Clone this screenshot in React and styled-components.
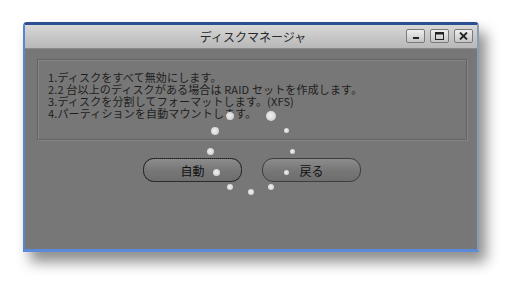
import React from 'react';
import styled, { createGlobalStyle } from 'styled-components';

const GlobalStyle = createGlobalStyle`
  html, body {
    margin: 0;
    padding: 0;
    background: #ffffff;
  }
  body {
    font-family: "Noto Sans CJK JP", "Liberation Sans", sans-serif;
  }
`;

const lines = [
  '1.ディスクをすべて無効にします。',
  '2.2 台以上のディスクがある場合は RAID セットを作成します。',
  '3.ディスクを分割してフォーマットします。(XFS)',
  '4.パーティションを自動マウントします。',
];

// spinner dots: offsets from ring centre, radius
const dots = [
  { x: -21, y: -37, r: 4 },
  { x: 20, y: -37, r: 5 },
  { x: 35, y: -23, r: 2.5 },
  { x: 41, y: -2, r: 2.5 },
  { x: 35, y: 19, r: 2.5 },
  { x: 20, y: 34, r: 3 },
  { x: 0, y: 39, r: 3 },
  { x: -21, y: 34, r: 3 },
  { x: -35, y: 19, r: 3.5 },
  { x: -41, y: -2, r: 3.5 },
  { x: -36, y: -22, r: 4 },
];

export default function App() {
  return (
    <>
      <GlobalStyle />
      <Page>
        <Window>
          <TitleBar>
            <Title>ディスクマネージャ</Title>
            <Controls>
              <CtrlButton aria-label="minimize">
                <svg width="8" height="8" viewBox="0 0 8 8">
                  <rect x="1" y="5" width="6" height="2" fill="#222" />
                </svg>
              </CtrlButton>
              <CtrlButton aria-label="maximize">
                <svg width="9" height="8" viewBox="0 0 9 8">
                  <rect x="0.5" y="0.5" width="8" height="7" fill="none" stroke="#222" />
                  <rect x="0.5" y="0.5" width="8" height="2" fill="#222" />
                </svg>
              </CtrlButton>
              <CtrlButton aria-label="close">
                <svg width="9" height="8" viewBox="0 0 9 8">
                  <path d="M1 0.5 L8 7.5 M8 0.5 L1 7.5" stroke="#222" strokeWidth="1.8" />
                </svg>
              </CtrlButton>
            </Controls>
          </TitleBar>
          <Body>
            <GroupBox>
              {lines.map((l) => (
                <Line key={l}>{l}</Line>
              ))}
            </GroupBox>
            <ButtonRow>
              <PillButton focused>自動</PillButton>
              <PillButton>戻る</PillButton>
            </ButtonRow>
            <Spinner>
              {dots.map((d, i) => (
                <Dot
                  key={i}
                  style={{
                    left: d.x - d.r,
                    top: d.y - d.r,
                    width: d.r * 2,
                    height: d.r * 2,
                  }}
                />
              ))}
            </Spinner>
          </Body>
        </Window>
      </Page>
    </>
  );
}

const Page = styled.div`
  width: 523px;
  height: 295px;
  padding: 22px 0 0 23px;
  box-sizing: border-box;
  background: #ffffff;
`;

const Window = styled.div`
  width: 456px;
  height: 230px;
  box-sizing: border-box;
  display: flex;
  flex-direction: column;
  border-top: 3px solid #2c4f94;
  border-left: 2px solid #5585d6;
  border-right: 2px solid #8a9cb2;
  border-bottom: 3px solid;
  border-image: none;
  border-bottom-color: #5a8ad8;
  border-radius: 4px 4px 0 0;
  background: #777777;
  box-shadow: 7px 10px 14px rgba(0, 0, 0, 0.45);
`;

const TitleBar = styled.div`
  height: 23px;
  flex-shrink: 0;
  display: flex;
  align-items: center;
  justify-content: center;
  position: relative;
  background: linear-gradient(#d8d8d8, #c4c4c4 60%, #b8b8b8);
  border-bottom: 1px solid #8a8a8a;
`;

const Title = styled.div`
  font-size: 12px;
  color: #2a2a2a;
  padding-left: 4px;
`;

const Controls = styled.div`
  position: absolute;
  right: 4px;
  top: 4px;
  display: flex;
  gap: 5px;
`;

const CtrlButton = styled.div`
  width: 19px;
  height: 14px;
  box-sizing: border-box;
  border: 1px solid #7a7a7a;
  border-radius: 2px;
  background: linear-gradient(#eeeeee, #c4c4c4);
  display: flex;
  align-items: center;
  justify-content: center;
`;

const Body = styled.div`
  flex: 1;
  position: relative;
  padding: 10px 10px 0 12px;
  display: flex;
  flex-direction: column;
`;

const GroupBox = styled.div`
  height: 81px;
  box-sizing: border-box;
  border: 1px solid #646464;
  box-shadow: inset 1px 1px 0 #868686, 1px 1px 0 #868686;
  padding: 11px 0 0 10px;
`;

const Line = styled.div`
  font-size: 11px;
  line-height: 12px;
  letter-spacing: 0.15px;
  color: #1e1e1e;
  white-space: nowrap;
`;

const ButtonRow = styled.div`
  display: flex;
  justify-content: center;
  gap: 20px;
  margin-top: 18px;
`;

const PillButton = styled.div`
  width: 99px;
  height: 24px;
  box-sizing: border-box;
  border: 1px solid #3e3e3e;
  border-radius: 11px;
  background: linear-gradient(#8c8c8c, #767676 55%, #6e6e6e);
  display: flex;
  align-items: center;
  justify-content: center;
  font-size: 12px;
  color: #111;
  outline: ${(p) => (p.focused ? '1px dotted #1a1a1a' : 'none')};
  outline-offset: -1px;
`;

const Spinner = styled.div`
  position: absolute;
  left: 226px;
  top: 104px;
  width: 0;
  height: 0;
`;

const Dot = styled.div`
  position: absolute;
  border-radius: 50%;
  background: radial-gradient(circle at 45% 45%, #ffffff, #e4e4e4 55%, #cfcfcf);
  opacity: 0.9;
`;
